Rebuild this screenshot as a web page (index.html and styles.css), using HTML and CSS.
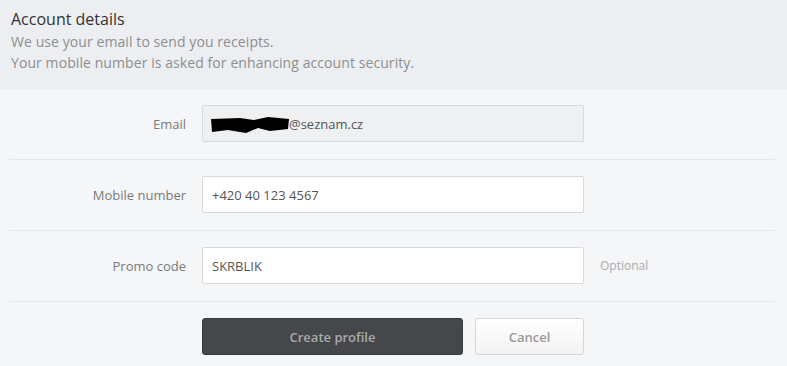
FILE: index.html
```html
<!DOCTYPE html>
<html lang="en">
<head>
  <meta charset="UTF-8" />
  <title>Account details</title>
  <link rel="stylesheet" href="styles.css">
</head>
<body>
  <div class="panel-head">
    <h2>Account details</h2>
    <p>We use your email to send you receipts.</p>
    <p>Your mobile number is asked for enhancing account security.</p>
  </div>

  <form class="profile-form">
    <div class="form-row">
      <label class="form-label">Email</label>
      <div class="field field-disabled">
        <svg class="redact" width="80" height="16" viewBox="0 0 80 16">
          <path d="M1 2 L30 1 L44 3 L58 0 L79 2 L78 12 L60 14 L48 11 L36 16 L18 13 L2 15 Z" fill="#000"/>
        </svg>@seznam.cz
      </div>
    </div>

    <div class="form-row">
      <label class="form-label">Mobile number</label>
      <div class="field">+420 40 123 4567</div>
    </div>

    <div class="form-row">
      <label class="form-label">Promo code</label>
      <div class="field">SKRBLIK</div>
      <span class="hint">Optional</span>
    </div>

    <div class="form-actions">
      <button type="button" class="btn btn-dark">Create profile</button>
      <button type="button" class="btn btn-light">Cancel</button>
    </div>
  </form>
</body>
</html>
```

FILE: styles.css
```css
body {
  margin: 0;
  font-family: 'Open Sans', sans-serif;
  background-color: #f5f6f8;
  color: #444;
}

.panel-head {
  background-color: #eceef1;
  height: 89px;
  box-sizing: border-box;
  padding: 8px 11px 0;
}

.panel-head h2 {
  margin: 0 0 1px;
  font-size: 16px;
  font-weight: 400;
  line-height: 22px;
  color: #333;
}

.panel-head p {
  margin: 0;
  font-size: 14px;
  letter-spacing: 0.08px;
  line-height: 21px;
  color: #8e8e8e;
}

.profile-form {
  margin: 0 12px 0 9px;
}

.form-row {
  display: flex;
  align-items: center;
  padding: 16px 0 17px;
  border-bottom: 1px solid #e6e7e9;
}

.form-label {
  width: 177px;
  padding-right: 16px;
  text-align: right;
  font-size: 13px;
  color: #7a7a7a;
}

.field {
  display: flex;
  align-items: center;
  width: 382px;
  height: 37px;
  box-sizing: border-box;
  padding: 0 9px;
  background: #fff;
  border: 1px solid #d9dadc;
  border-radius: 2px;
  font-size: 13px;
  color: #555;
}

.field-disabled {
  background: #eff0f2;
}

.redact {
  margin: 2px -1px 0 -2px;
}

.hint {
  margin-left: 16px;
  font-size: 12px;
  color: #aaa;
}

.form-actions {
  display: flex;
  gap: 12px;
  padding: 16px 0 0 193px;
}

.btn {
  height: 37px;
  border-radius: 3px;
  font-family: 'Open Sans', sans-serif;
  font-size: 13px;
  font-weight: 600;
  cursor: pointer;
}

.btn-dark {
  width: 261px;
  background: #46474b;
  border: 1px solid #3a3b3e;
  color: #a9aaad;
}

.btn-light {
  width: 109px;
  background: linear-gradient(#fff, #f3f3f3);
  border: 1px solid #d6d6d6;
  color: #9a9a9a;
}
```
